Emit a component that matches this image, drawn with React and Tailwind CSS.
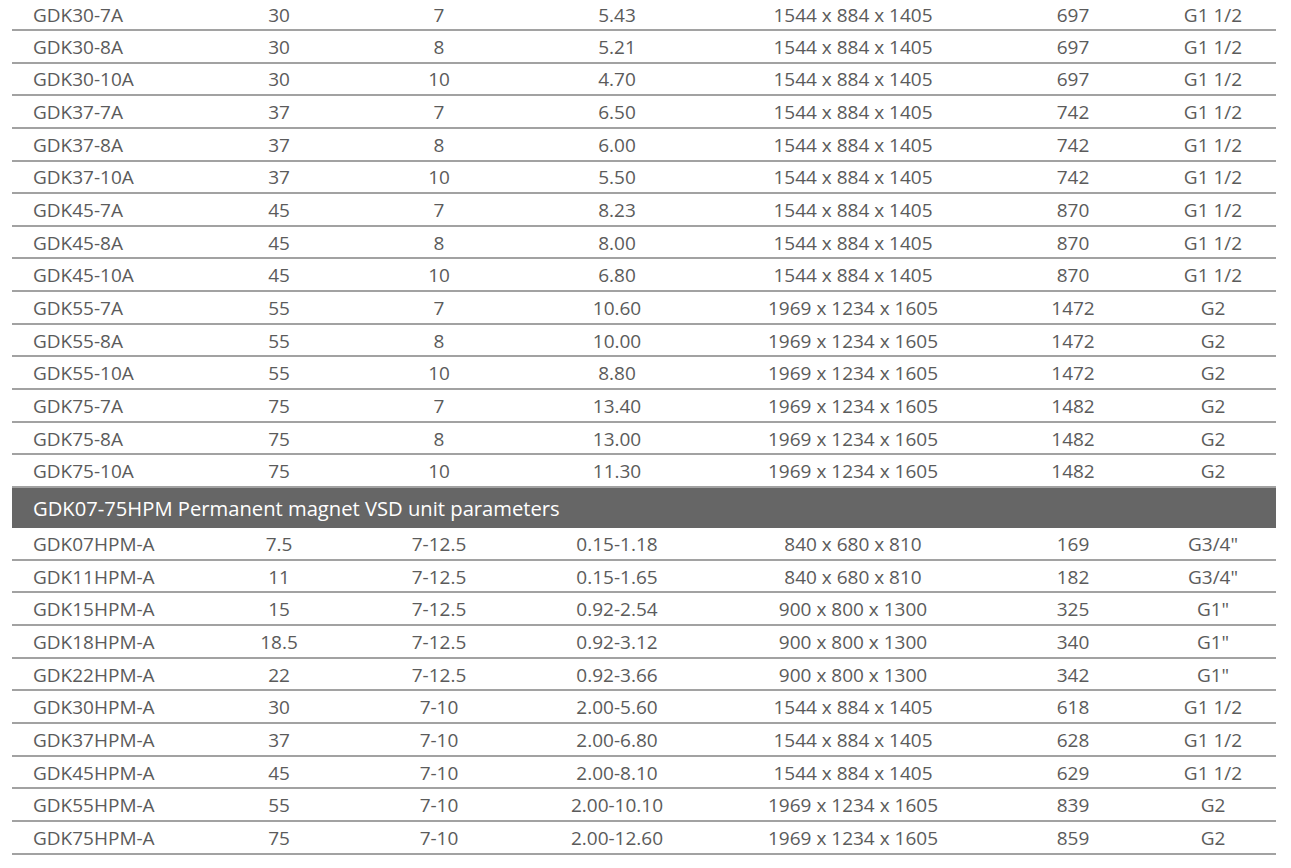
import React from "react";

const rowsA = [
  ["GDK30-7A", "30", "7", "5.43", "1544 x 884 x 1405", "697", "G1 1/2"],
  ["GDK30-8A", "30", "8", "5.21", "1544 x 884 x 1405", "697", "G1 1/2"],
  ["GDK30-10A", "30", "10", "4.70", "1544 x 884 x 1405", "697", "G1 1/2"],
  ["GDK37-7A", "37", "7", "6.50", "1544 x 884 x 1405", "742", "G1 1/2"],
  ["GDK37-8A", "37", "8", "6.00", "1544 x 884 x 1405", "742", "G1 1/2"],
  ["GDK37-10A", "37", "10", "5.50", "1544 x 884 x 1405", "742", "G1 1/2"],
  ["GDK45-7A", "45", "7", "8.23", "1544 x 884 x 1405", "870", "G1 1/2"],
  ["GDK45-8A", "45", "8", "8.00", "1544 x 884 x 1405", "870", "G1 1/2"],
  ["GDK45-10A", "45", "10", "6.80", "1544 x 884 x 1405", "870", "G1 1/2"],
  ["GDK55-7A", "55", "7", "10.60", "1969 x 1234 x 1605", "1472", "G2"],
  ["GDK55-8A", "55", "8", "10.00", "1969 x 1234 x 1605", "1472", "G2"],
  ["GDK55-10A", "55", "10", "8.80", "1969 x 1234 x 1605", "1472", "G2"],
  ["GDK75-7A", "75", "7", "13.40", "1969 x 1234 x 1605", "1482", "G2"],
  ["GDK75-8A", "75", "8", "13.00", "1969 x 1234 x 1605", "1482", "G2"],
  ["GDK75-10A", "75", "10", "11.30", "1969 x 1234 x 1605", "1482", "G2"],
];

const rowsB = [
  ["GDK07HPM-A", "7.5", "7-12.5", "0.15-1.18", "840 x 680 x 810", "169", 'G3/4"'],
  ["GDK11HPM-A", "11", "7-12.5", "0.15-1.65", "840 x 680 x 810", "182", 'G3/4"'],
  ["GDK15HPM-A", "15", "7-12.5", "0.92-2.54", "900 x 800 x 1300", "325", 'G1"'],
  ["GDK18HPM-A", "18.5", "7-12.5", "0.92-3.12", "900 x 800 x 1300", "340", 'G1"'],
  ["GDK22HPM-A", "22", "7-12.5", "0.92-3.66", "900 x 800 x 1300", "342", 'G1"'],
  ["GDK30HPM-A", "30", "7-10", "2.00-5.60", "1544 x 884 x 1405", "618", "G1 1/2"],
  ["GDK37HPM-A", "37", "7-10", "2.00-6.80", "1544 x 884 x 1405", "628", "G1 1/2"],
  ["GDK45HPM-A", "45", "7-10", "2.00-8.10", "1544 x 884 x 1405", "629", "G1 1/2"],
  ["GDK55HPM-A", "55", "7-10", "2.00-10.10", "1969 x 1234 x 1605", "839", "G2"],
  ["GDK75HPM-A", "75", "7-10", "2.00-12.60", "1969 x 1234 x 1605", "859", "G2"],
];

// column widths measured off the sheet
const cols = ["w-[192px] pl-[21px] text-left", "w-[150px] text-center", "w-[170px] text-center", "w-[186px] text-center", "w-[286px] text-center", "w-[154px] text-center", "w-[126px] text-center"];

const Row = ({ cells, h }) => (
  <div className={`flex items-center border-b-2 border-[#a2a2a2] ${h}`}>
    {cells.map((c, i) => (
      <div key={i} className={`${cols[i]} shrink-0 pt-[2px]`}>
        {c}
      </div>
    ))}
  </div>
);

export default function App() {
  return (
    <div
      className="bg-white w-[1291px] h-[868px] overflow-hidden text-[#5b5b5b] text-[19px] leading-none"
      style={{ fontFamily: '"Open Sans", "Noto Sans", sans-serif' }}
    >
      <div className="ml-[12px] w-[1264px]">
        {rowsA.map((r, i) => (
          <Row key={r[0]} cells={r} h={i === 0 ? "h-[31px]" : "h-[32.65px]"} />
        ))}
        <div className="h-[40px] bg-[#666666] text-white text-[20.2px] flex items-center pl-[21px]">
          GDK07-75HPM Permanent magnet VSD unit parameters
        </div>
        {rowsB.map((r) => (
          <Row key={r[0]} cells={r} h="h-[32.7px]" />
        ))}
      </div>
    </div>
  );
}
